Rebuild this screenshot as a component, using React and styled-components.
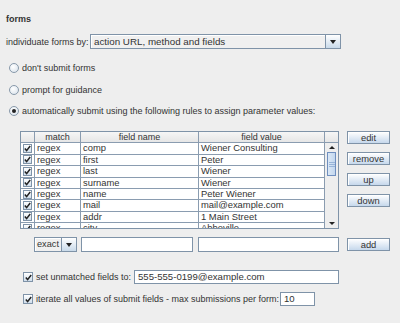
import React from 'react';
import styled, { createGlobalStyle } from 'styled-components';

const GlobalStyle = createGlobalStyle`
  html, body { margin: 0; padding: 0; background: #eeeeee; }
  body {
    font-family: "Liberation Sans", Arial, sans-serif;
    font-size: 9px;
    color: #333333;
  }
`;

const Panel = styled.div`
  width: 400px;
  height: 323px;
  box-sizing: border-box;
  padding: 13px 0 0 6px;
  display: flex;
  flex-direction: column;
  overflow: hidden;
`;

const Title = styled.div`
  height: 12px;
  line-height: 12px;
  font-weight: bold;
`;

const Row = styled.div`
  display: flex;
  align-items: center;
  height: ${p => p.h || 12}px;
  margin-top: ${p => p.mt || 0}px;
  margin-left: ${p => p.ml || 0}px;
`;

const Label = styled.span`
  white-space: nowrap;
`;

const Combo = styled.div`
  display: flex;
  width: ${p => p.w}px;
  height: 15px;
  box-sizing: border-box;
  border: 1px solid #7f93a8;
  background: #f0f0f0;
  box-shadow: inset 1px 1px 0 #ffffff;
`;

const ComboText = styled.div`
  flex: 1;
  padding-left: ${p => (p.big ? 3 : 2)}px;
  line-height: 13px;
  font-size: ${p => (p.big ? 9.8 : 9.2)}px;
  white-space: nowrap;
  overflow: hidden;
  border-right: 1px solid #7f93a8;
`;

const ArrowButton = styled.div`
  width: 14px;
  display: flex;
  align-items: center;
  justify-content: center;
  background: linear-gradient(#ffffff, #c9daea);
  &::after {
    content: '';
    border-left: 3.5px solid transparent;
    border-right: 3.5px solid transparent;
    border-top: 4px solid #222;
  }
`;

const RadioDot = styled.span`
  width: 10px;
  height: 10px;
  box-sizing: border-box;
  border-radius: 50%;
  border: 1px solid #8899aa;
  background: radial-gradient(circle at 40% 35%, #ffffff, #d6e0ea);
  display: inline-flex;
  align-items: center;
  justify-content: center;
  margin: 0 3px 0 3px;
  &::after {
    content: '';
    width: 4px;
    height: 4px;
    border-radius: 50%;
    background: ${p => (p.on ? '#222' : 'transparent')};
  }
`;

const TableArea = styled.div`
  display: flex;
  margin-top: 14px;
  margin-left: 14px;
  gap: 8px;
`;

const Table = styled.div`
  width: 319px;
  height: 98px;
  box-sizing: border-box;
  border: 1px solid #7f93a8;
  display: flex;
  overflow: hidden;
  background: #eeeeee;
`;

const Grid = styled.div`
  display: grid;
  grid-template-columns: 14px 46px 118px 126px;
  grid-auto-rows: 11.4px;
  width: 304px;
  align-content: start;
`;

const Head = styled.div`
  background: linear-gradient(#f6f6f6, #e6e6e6);
  border-right: 1px solid #8a9cb0;
  border-bottom: 1px solid #8a9cb0;
  text-align: center;
  line-height: 10px;
  box-sizing: border-box;
`;

const Cell = styled.div`
  background: #ffffff;
  border-right: 1px solid #8a9cb0;
  border-bottom: 1px solid #8a9cb0;
  box-sizing: border-box;
  padding-left: ${p => (p.check ? 0 : 2)}px;
  line-height: 10.4px;
  white-space: nowrap;
  overflow: hidden;
  display: flex;
  align-items: center;
  justify-content: ${p => (p.check ? 'center' : 'flex-start')};
  font-size: 9.4px;
`;

const Scroll = styled.div`
  width: 14px;
  display: flex;
  flex-direction: column;
`;

const ScrollCorner = styled.div`
  height: 11.4px;
  box-sizing: border-box;
  background: linear-gradient(#f6f6f6, #e6e6e6);
  border-bottom: 1px solid #8a9cb0;
`;

const ScrollTrack = styled.div`
  flex: 1;
  display: flex;
  flex-direction: column;
  padding: 0 2px 0 2px;
  background: #eeeeee;
`;

const ScrollArrow = styled.div`
  height: 9px;
  display: flex;
  align-items: center;
  justify-content: center;
  margin-top: ${p => (p.down ? 'auto' : '0')};
  &::after {
    content: '';
    border-left: 3px solid transparent;
    border-right: 3px solid transparent;
    ${p => (p.down ? 'border-top: 3px solid #222;' : 'border-bottom: 3px solid #222;')}
  }
`;

const Thumb = styled.div`
  height: 24px;
  box-sizing: border-box;
  border: 1px solid #6f8fbf;
  background: linear-gradient(90deg, #dbe8f6, #c3d7ee);
  display: flex;
  flex-direction: column;
  justify-content: center;
  align-items: center;
  gap: 1px;
  & > i {
    width: 6px;
    height: 1px;
    background: #98b4d8;
  }
`;

const Buttons = styled.div`
  display: flex;
  flex-direction: column;
  gap: 8px;
`;

const Button = styled.div`
  width: 43px;
  height: 13px;
  box-sizing: border-box;
  border: 1px solid #7f93a8;
  background: linear-gradient(#ffffff, #c6d8ec);
  box-shadow: inset 1px 1px 0 #ffffff;
  text-align: center;
  line-height: 11px;
  font-size: 9.4px;
  margin-left: ${p => p.ml || 0}px;
`;

const Input = styled.div`
  width: ${p => p.w}px;
  height: ${p => p.h || 15}px;
  box-sizing: border-box;
  border: 1px solid #7f93a8;
  background: #ffffff;
  padding-left: 3px;
  line-height: ${p => (p.h || 15) - 2}px;
  font-size: 9.6px;
  white-space: nowrap;
  overflow: hidden;
  margin-left: ${p => p.ml || 0}px;
`;

const BoxWrap = styled.span`
  width: ${p => (p.small ? 9 : 10)}px;
  height: ${p => (p.small ? 9 : 10)}px;
  box-sizing: border-box;
  border: 1px solid #7f93a8;
  background: linear-gradient(#ffffff, #d0deec);
  display: inline-flex;
  align-items: center;
  justify-content: center;
  flex: none;
`;

const Check = ({ small }) => (
  <BoxWrap small={small}>
    <svg width="7" height="7" viewBox="0 0 7 7">
      <path d="M0.8 3.6 L2.6 5.6 L6.2 1" fill="none" stroke="#222" strokeWidth="1.5" />
    </svg>
  </BoxWrap>
);

const rows = [
  ['comp', 'Wiener Consulting'],
  ['first', 'Peter'],
  ['last', 'Wiener'],
  ['surname', 'Wiener'],
  ['name', 'Peter Wiener'],
  ['mail', 'mail@example.com'],
  ['addr', '1 Main Street'],
  ['city', 'Abbeville'],
];

export default function App() {
  return (
    <>
      <GlobalStyle />
      <Panel>
        <Title>forms</Title>

        <Row h={15} mt={9}>
          <Label style={{ width: 84 }}>individuate forms by:</Label>
          <Combo w={251}>
            <ComboText big>action URL, method and fields</ComboText>
            <ArrowButton />
          </Combo>
        </Row>

        <Row mt={13}>
          <RadioDot />
          <Label>don't submit forms</Label>
        </Row>
        <Row mt={10}>
          <RadioDot />
          <Label>prompt for guidance</Label>
        </Row>
        <Row mt={9}>
          <RadioDot on />
          <Label>automatically submit using the following rules to assign parameter values:</Label>
        </Row>

        <TableArea>
          <Table>
            <Grid>
              <Head />
              <Head>match</Head>
              <Head>field name</Head>
              <Head>field value</Head>
              {rows.map(([name, value]) => (
                <React.Fragment key={name}>
                  <Cell check>
                    <Check small />
                  </Cell>
                  <Cell>regex</Cell>
                  <Cell>{name}</Cell>
                  <Cell>{value}</Cell>
                </React.Fragment>
              ))}
            </Grid>
            <Scroll>
              <ScrollCorner />
              <ScrollTrack>
                <ScrollArrow />
                <Thumb>
                  <i />
                  <i />
                  <i />
                </Thumb>
                <ScrollArrow down />
              </ScrollTrack>
            </Scroll>
          </Table>
          <Buttons>
            <Button>edit</Button>
            <Button>remove</Button>
            <Button>up</Button>
            <Button>down</Button>
          </Buttons>
        </TableArea>

        <Row h={15} mt={8} ml={28}>
          <Combo w={43}>
            <ComboText>exact</ComboText>
            <ArrowButton />
          </Combo>
          <Input w={112} ml={4} />
          <Input w={141} ml={5} />
          <Button ml={8}>add</Button>
        </Row>

        <Row h={14} mt={18} ml={17}>
          <Check />
          <Label style={{ marginLeft: 3, width: 98 }}>set unmatched fields to:</Label>
          <Input w={205} h={14}>555-555-0199@example.com</Input>
        </Row>

        <Row h={14} mt={8} ml={17}>
          <Check />
          <Label style={{ marginLeft: 3, width: 244 }}>
            iterate all values of submit fields - max submissions per form:
          </Label>
          <Input w={35} h={14}>10</Input>
        </Row>
      </Panel>
    </>
  );
}
